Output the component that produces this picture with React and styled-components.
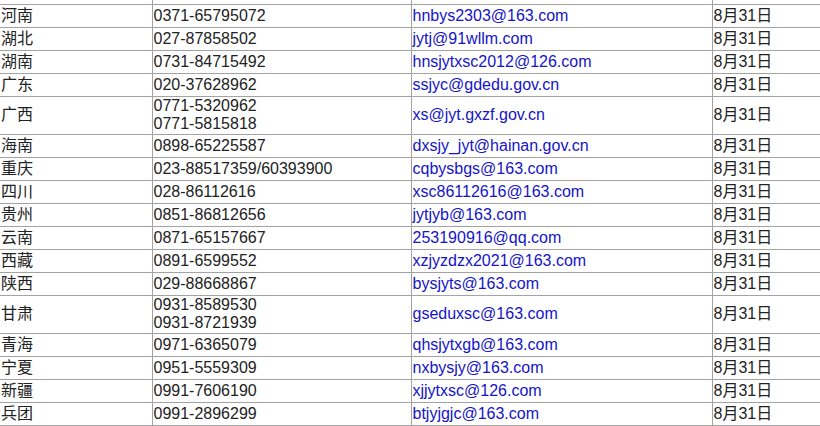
import styled, { createGlobalStyle } from "styled-components";

const GlobalStyle = createGlobalStyle`
  html, body {
    margin: 0;
    padding: 0;
    background: #fff;
    overflow: hidden;
  }
`;

const Table = styled.table`
  border-collapse: collapse;
  table-layout: fixed;
  width: 840px;
  font-family: "Liberation Sans", Arial, "Noto Sans CJK SC", sans-serif;
  font-size: 16px;
  line-height: 18px;
  color: #222;
`;

const Row = styled.tr`
  height: ${(p) => (p.$tall ? "38px" : "23px")};
`;

const Stub = styled.tr`
  height: 4px;
`;

const Cell = styled.td`
  border: 1px solid #a3a3a3;
  padding: 0 1px;
  vertical-align: middle;
  white-space: nowrap;
  overflow: hidden;

  &:first-child {
    border-left: none;
  }
`;

const StubCell = styled(Cell)`
  border-top: none;
  padding: 0;
`;

const Mail = styled.span`
  color: #1414c8;
`;

const rows = [
  ["河南", ["0371-65795072"], "hnbys2303@163.com"],
  ["湖北", ["027-87858502"], "jytj@91wllm.com"],
  ["湖南", ["0731-84715492"], "hnsjytxsc2012@126.com"],
  ["广东", ["020-37628962"], "ssjyc@gdedu.gov.cn"],
  ["广西", ["0771-5320962", "0771-5815818"], "xs@jyt.gxzf.gov.cn"],
  ["海南", ["0898-65225587"], "dxsjy_jyt@hainan.gov.cn"],
  ["重庆", ["023-88517359/60393900"], "cqbysbgs@163.com"],
  ["四川", ["028-86112616"], "xsc86112616@163.com"],
  ["贵州", ["0851-86812656"], "jytjyb@163.com"],
  ["云南", ["0871-65157667"], "253190916@qq.com"],
  ["西藏", ["0891-6599552"], "xzjyzdzx2021@163.com"],
  ["陕西", ["029-88668867"], "bysjyts@163.com"],
  ["甘肃", ["0931-8589530", "0931-8721939"], "gseduxsc@163.com"],
  ["青海", ["0971-6365079"], "qhsjytxgb@163.com"],
  ["宁夏", ["0951-5559309"], "nxbysjy@163.com"],
  ["新疆", ["0991-7606190"], "xjjytxsc@126.com"],
  ["兵团", ["0991-2896299"], "btjyjgjc@163.com"],
];

export default function App() {
  return (
    <>
      <GlobalStyle />
      <Table>
        <colgroup>
          <col style={{ width: 152 }} />
          <col style={{ width: 259 }} />
          <col style={{ width: 301 }} />
          <col style={{ width: 128 }} />
        </colgroup>
        <tbody>
          <Stub>
            <StubCell />
            <StubCell />
            <StubCell />
            <StubCell />
          </Stub>
          {rows.map(([prov, phones, mail]) => (
            <Row key={prov} $tall={phones.length > 1}>
              <Cell>{prov}</Cell>
              <Cell>
                {phones.map((p, i) => (
                  <div key={i}>{p}</div>
                ))}
              </Cell>
              <Cell>
                <Mail>{mail}</Mail>
              </Cell>
              <Cell>8月31日</Cell>
            </Row>
          ))}
        </tbody>
      </Table>
    </>
  );
}
